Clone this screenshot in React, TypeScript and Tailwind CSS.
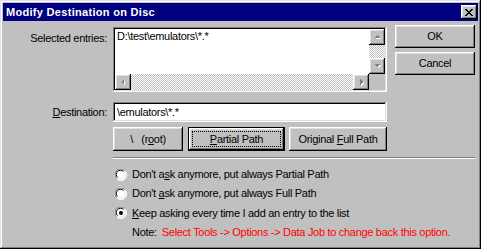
import React from "react";

const raised =
  "shadow-[inset_-1px_-1px_#000,inset_1px_1px_#fff,inset_-2px_-2px_#808080,inset_2px_2px_#dfdfdf]";
const sunken =
  "shadow-[inset_-1px_-1px_#fff,inset_1px_1px_#808080,inset_-2px_-2px_#dfdfdf,inset_2px_2px_#000]";
const dither =
  "bg-[repeating-conic-gradient(#ffffff_0_25%,#c0c0c0_0_50%)] bg-[length:2px_2px]";

const Arrow: React.FC<{ dir: "up" | "down" | "left" | "right" }> = ({ dir }) => {
  const pts: Record<string, string> = {
    up: "4,2 7,5 1,5",
    down: "1,2 7,2 4,5",
    left: "5,1 5,7 2,4",
    right: "3,1 3,7 6,4",
  };
  return (
    <svg width="8" height="8" viewBox="0 0 8 8" shapeRendering="crispEdges">
      <polygon points={pts[dir]} fill="#ffffff" transform="translate(1,1)" />
      <polygon points={pts[dir]} fill="#808080" />
    </svg>
  );
};

const ScrollBtn: React.FC<{ dir: "up" | "down" | "left" | "right" }> = ({ dir }) => (
  <div className={`w-[16px] h-[16px] bg-[#c0c0c0] flex items-center justify-center ${raised}`}>
    <Arrow dir={dir} />
  </div>
);

const Radio: React.FC<{ checked?: boolean }> = ({ checked }) => (
  <svg width="12" height="12" viewBox="0 0 12 12" className="shrink-0">
    <circle cx="6" cy="6" r="5.5" fill="#ffffff" />
    <path d="M1.5 9.5 A5.5 5.5 0 0 1 9.5 1.5" stroke="#808080" strokeWidth="1" fill="none" />
    <path d="M9.9 2.1 A5.5 5.5 0 0 1 2.1 9.9" stroke="#ffffff" strokeWidth="1" fill="none" />
    <path d="M2.5 8.5 A4.2 4.2 0 0 1 8.5 2.5" stroke="#000000" strokeWidth="1" fill="none" />
    <path d="M9 3 A4.2 4.2 0 0 1 3 9" stroke="#dfdfdf" strokeWidth="1" fill="none" />
    {checked && <circle cx="6" cy="6" r="2" fill="#000000" />}
  </svg>
);

const Button: React.FC<{ w: string; children: React.ReactNode; focused?: boolean }> = ({ w, children, focused }) => {
  if (focused) {
    return (
      <div className={`${w} h-[24px] border border-black bg-[#c0c0c0] flex`}>
        <div className={`flex-1 flex items-center justify-center p-[3px] ${raised}`}>
          <div className="w-full h-full border border-dotted border-black flex items-center justify-center">
            {children}
          </div>
        </div>
      </div>
    );
  }
  return (
    <div className={`${w} h-[24px] bg-[#c0c0c0] flex items-center justify-center ${raised}`}>
      {children}
    </div>
  );
};

const App: React.FC = () => {
  return (
    <div className="w-[481px] h-[249px] bg-[#c0c0c0] p-[3px] shadow-[inset_-1px_-1px_#000,inset_1px_1px_#dfdfdf,inset_-2px_-2px_#808080,inset_2px_2px_#fff] font-['Liberation_Sans',Arial,sans-serif] text-[11px] text-black leading-[13px] overflow-hidden">
      {/* title bar */}
      <div className="h-[18px] bg-[#000080] flex items-center justify-between pl-[3px] pr-[1px]">
        <span className="text-white font-bold text-[11px] tracking-[0.3px]">Modify Destination on Disc</span>
        <div className={`w-[16px] h-[14px] bg-[#c0c0c0] flex items-center justify-center ${raised}`}>
          <svg width="8" height="7" viewBox="0 0 8 7" shapeRendering="crispEdges">
            <path d="M0 0h2v1h-2zM6 0h2v1h-2zM1 1h2v1h-2zM5 1h2v1h-2zM2 2h4v1h-4zM3 3h2v1h-2zM2 4h4v1h-4zM1 5h2v1h-2zM5 5h2v1h-2zM0 6h2v1h-2zM6 6h2v1h-2z" fill="#000" />
          </svg>
        </div>
      </div>

      <div className="tracking-[-0.3px]">
        {/* selected entries */}
        <div className="flex pt-[4px]">
          <div className="w-[110px] pr-[6px] text-right pt-[7px]">Selected entries:</div>
          <div className={`mt-[2px] w-[274px] h-[65px] bg-white p-[2px] flex flex-col ${sunken}`}>
            <div className="flex flex-1">
              <div className="flex-1 pl-[2px] pt-[1px]">D:\test\emulators\*.*</div>
              <div className="w-[16px] flex flex-col">
                <ScrollBtn dir="up" />
                <div className={`flex-1 ${dither}`} />
                <ScrollBtn dir="down" />
              </div>
            </div>
            <div className="flex h-[16px]">
              <ScrollBtn dir="left" />
              <div className={`flex-1 ${dither}`} />
              <ScrollBtn dir="right" />
              <div className="w-[16px] bg-[#c0c0c0]" />
            </div>
          </div>
          <div className="ml-[8px] flex flex-col gap-[4px]">
            <div className={`w-[80px] h-[23px] flex items-center justify-center ${raised}`}>OK</div>
            <div className={`w-[80px] h-[23px] flex items-center justify-center ${raised}`}>Cancel</div>
          </div>
        </div>

        {/* destination */}
        <div className="flex items-center mt-[10px]">
          <div className="w-[110px] pr-[6px] text-right">
            <span className="underline">D</span>estination:
          </div>
          <div className={`w-[274px] h-[20px] bg-white flex items-center pl-[4px] ${sunken}`}>\emulators\*.*</div>
        </div>

        {/* path buttons */}
        <div className="flex mt-[5px] pl-[110px]">
          <Button w="w-[70px]">
            <span className="whitespace-pre">{"\\   ("}r<span className="underline">o</span>ot)</span>
          </Button>
          <div className="ml-[5px]">
            <Button w="w-[97px]" focused>
              <span>
                <span className="underline">P</span>artial Path
              </span>
            </Button>
          </div>
          <div className="ml-[4px]">
            <Button w="w-[98px]">
              <span>
                Original <span className="underline">F</span>ull Path
              </span>
            </Button>
          </div>
        </div>

        {/* separator */}
        <div className="ml-[110px] mt-[6px] w-[362px] border-t border-t-[#808080] border-b border-b-white" />

        {/* options */}
        <div className="mt-[6px] pl-[112px]">
          <div className="h-[19px] flex items-center gap-[5px]">
            <Radio />
            <span>
              Don't a<span className="underline">s</span>k anymore, put always Partial Path
            </span>
          </div>
          <div className="h-[19px] flex items-center gap-[5px]">
            <Radio />
            <span>
              Don't <span className="underline">a</span>sk anymore, put always Full Path
            </span>
          </div>
          <div className="h-[20px] flex items-center gap-[5px]">
            <Radio checked />
            <span>
              <span className="underline">K</span>eep asking every time I add an entry to the list
            </span>
          </div>
          <div className="h-[19px] flex items-center pl-[17px]">
            <span>Note:</span>
            <span className="ml-[5px] text-[#ff0000]">Select Tools -&gt; Options -&gt; Data Job to change back this option.</span>
          </div>
        </div>
      </div>
    </div>
  );
};

export default App;
